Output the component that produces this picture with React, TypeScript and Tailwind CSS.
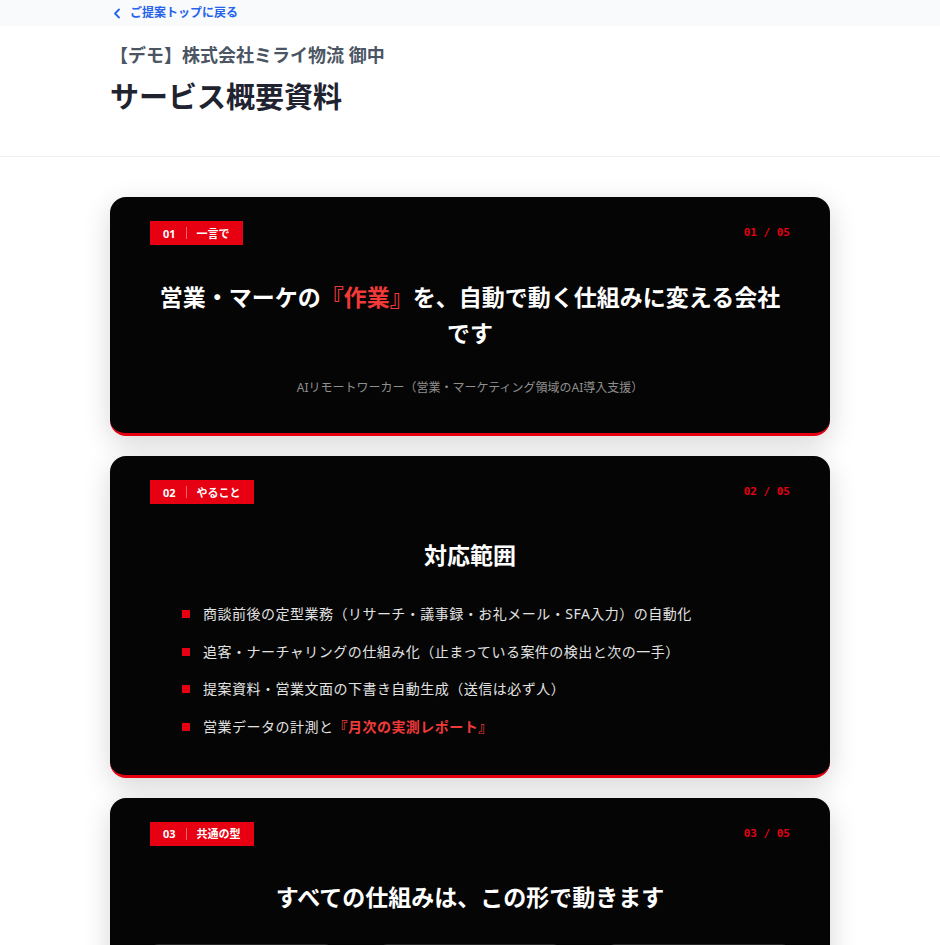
import React from "react";

function Badge({ num, label }: { num: string; label: string }) {
  return (
    <div className="flex h-6 items-center gap-[10px] bg-[#e60012] px-[13px] text-[11px] font-bold leading-none text-white">
      <span>{num}</span>
      <span className="h-3 w-px bg-white/40" />
      <span>{label}</span>
    </div>
  );
}

function CardHeader({ num, label }: { num: string; label: string }) {
  return (
    <div className="flex items-center justify-between">
      <Badge num={num} label={label} />
      <span className="font-['DejaVu_Sans_Mono',monospace] text-[11px] font-bold text-[#e60012]">
        {num} / 05
      </span>
    </div>
  );
}

function Card({ children, pb }: { children: React.ReactNode; pb: string }) {
  return (
    <section className={`rounded-2xl border-b-[3px] border-[#e60012] bg-[#050505] px-10 pt-6 shadow-[0_8px_28px_rgba(0,0,0,0.16)] ${pb}`}>
      {children}
    </section>
  );
}

export default function App() {
  const items: React.ReactNode[] = [
    "商談前後の定型業務（リサーチ・議事録・お礼メール・SFA入力）の自動化",
    "追客・ナーチャリングの仕組み化（止まっている案件の検出と次の一手）",
    "提案資料・営業文面の下書き自動生成（送信は必ず人）",
    <>
      営業データの計測と
      <span className="font-bold text-[#f03a3a]">『月次の実測レポート』</span>
    </>,
  ];
  return (
    <div className="min-h-screen bg-white font-['Noto_Sans','Noto_Sans_CJK_JP',sans-serif]">
      <nav className="h-[26px] bg-[#f8fafc]">
        <div className="mx-auto flex h-full max-w-[720px] items-center">
          <a className="flex items-center gap-[9px] pl-[3px] text-[12px] font-bold text-[#2563eb]">
            <svg width="8" height="11" viewBox="0 0 8 11" fill="none">
              <path d="M6 1.5 2 5.5l4 4" stroke="#2563eb" strokeWidth="1.8" strokeLinecap="round" strokeLinejoin="round" />
            </svg>
            <span>ご提案トップに戻る</span>
          </a>
        </div>
      </nav>
      <header className="border-b border-[#f1f1f3] bg-white">
        <div className="mx-auto max-w-[720px] pt-[15px] pb-[41px]">
          <p className="text-[18px] font-bold leading-[28px] text-[#4b5563]">【デモ】株式会社ミライ物流 御中</p>
          <h1 className="mt-[10px] text-[29px] font-bold leading-[36px] text-[#1f2330]">サービス概要資料</h1>
        </div>
      </header>
      <main className="mx-auto flex max-w-[720px] flex-col gap-5 pt-10 pb-10">
        <Card pb="pb-[36px]">
          <CardHeader num="01" label="一言で" />
          <h2 className="mt-[34px] text-center text-[23px] font-bold leading-[36px] text-white">
            営業・マーケの<span className="text-[#f03a3a]">『作業』</span>を、自動で動く仕組みに変える会社です
          </h2>
          <p className="mt-[28px] text-center text-[12px] leading-[18px] text-[#8f8f8f]">
            AIリモートワーカー（営業・マーケティング領域のAI導入支援）
          </p>
        </Card>
        <Card pb="pb-[36px]">
          <CardHeader num="02" label="やること" />
          <h2 className="mt-[33px] text-center text-[23px] font-bold leading-[36px] text-white">対応範囲</h2>
          <ul className="mx-auto mt-[29px] flex max-w-xl flex-col gap-[14px]">
            {items.map((t, i) => (
              <li key={i} className="flex items-center gap-[13px] text-[14px] leading-[23.7px] tracking-[0.035em] text-[#e2e2e2]">
                <span className="h-2 w-2 shrink-0 bg-[#e60012]" />
                <span>{t}</span>
              </li>
            ))}
          </ul>
        </Card>
        <Card pb="pb-[37px]">
          <CardHeader num="03" label="共通の型" />
          <h2 className="mt-[33px] text-center text-[23px] font-bold leading-[36px] text-white">
            すべての仕組みは、この形で動きます
          </h2>
          <div className="mt-[29px] flex items-center gap-4">
            {["トリガー", "AIが処理", "人が確認"].map((s, i) => (
              <React.Fragment key={s}>
                <div className="flex h-28 flex-1 items-end justify-center rounded-lg border border-[#262626] bg-[#0c0c0c] pb-6 text-sm text-white">
                  {s}
                </div>
                {i < 2 && <span className="w-[14px] text-[#e60012]">→</span>}
              </React.Fragment>
            ))}
          </div>
        </Card>
      </main>
    </div>
  );
}
